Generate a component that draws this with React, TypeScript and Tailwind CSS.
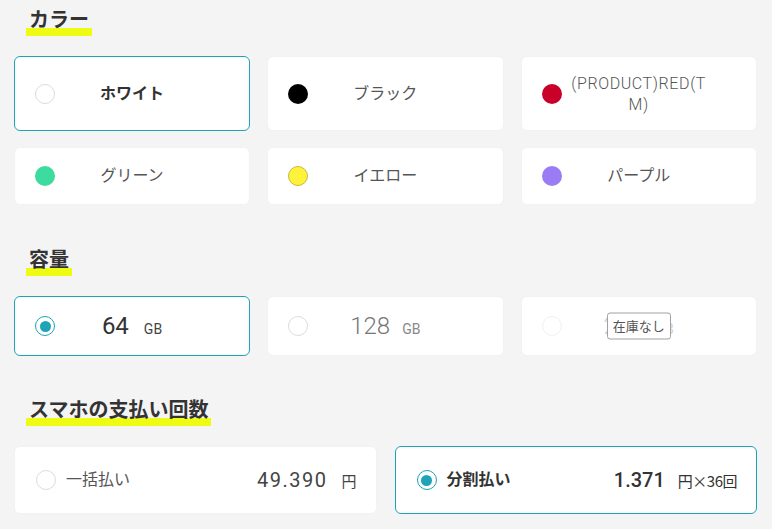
import React from "react";

function Radio({ state }: { state: "on" | "off" | "dim" }) {
  if (state === "on")
    return (
      <span className="flex h-[20px] w-[20px] shrink-0 items-center justify-center rounded-full border-[1.5px] border-[#1ea3b8] bg-white">
        <span className="h-[11px] w-[11px] rounded-full bg-[#1ea3b8]" />
      </span>
    );
  return (
    <span
      className={
        "h-[20px] w-[20px] shrink-0 rounded-full border bg-white " +
        (state === "dim" ? "border-[#f0f0f0]" : "border-[#dcdcdc]")
      }
    />
  );
}

function Heading({ children }: { children: React.ReactNode }) {
  return (
    <div className="ml-[12px]">
      <span className="inline-block h-[26px] bg-[linear-gradient(transparent_69%,#eefc14_69%)] px-[3px] text-[20px] font-bold leading-[20px] text-[#333]">
        {children}
      </span>
    </div>
  );
}

function Swatch({ color, border }: { color: string; border?: string }) {
  return (
    <span
      className="h-[20px] w-[20px] shrink-0 rounded-full"
      style={{ backgroundColor: color, border: border ? `1px solid ${border}` : undefined }}
    />
  );
}

function Card({
  selected,
  className,
  children,
}: {
  selected?: boolean;
  className: string;
  children: React.ReactNode;
}) {
  return (
    <div
      className={
        "relative flex items-center rounded-[6px] border bg-white " +
        (selected ? "border-[#1ea3b8]" : "border-[#f2f2f2]") +
        " " +
        className
      }
    >
      {children}
    </div>
  );
}

export default function App() {
  const colors = [
    { name: "グリーン", c: "#3ddba0" },
    { name: "イエロー", c: "#fff23a", b: "#c8b84a" },
    { name: "パープル", c: "#9a7cf5" },
  ];
  return (
    <div
      className="min-h-[529px] w-[772px] bg-[#f4f4f4] pl-[14px] pr-[15px] pt-[10px]"
      style={{ fontFamily: "Roboto, 'Noto Sans CJK JP', sans-serif" }}
    >
      <Heading>カラー</Heading>
      <div className="mt-[20px] grid grid-cols-3 gap-x-[17px] gap-y-[16px]">
        <Card selected className="h-[75px] pl-[20px]">
          <Radio state="off" />
          <span className="ml-[6px] w-[142px] text-center text-[16px] font-bold text-[#333]">ホワイト</span>
        </Card>
        <Card className="h-[75px] pl-[20px]">
          <Swatch color="#000" />
          <span className="ml-[6px] w-[142px] text-center text-[16px] text-[#555]">ブラック</span>
        </Card>
        <Card className="h-[75px] pl-[20px]">
          <Swatch color="#c8002a" />
          <span className="ml-[6px] w-[142px] text-center text-[16px] font-light leading-[21px] tracking-[0.6px] text-[#555]">
            (PRODUCT)RED(T
            <br />
            M)
          </span>
        </Card>
        {colors.map((x) => (
          <Card key={x.name} className="h-[58px] pl-[20px]">
            <Swatch color={x.c} border={x.b} />
            <span className="ml-[6px] w-[142px] text-center text-[16px] text-[#555]">{x.name}</span>
          </Card>
        ))}
      </div>

      <div className="mt-[45px]">
        <Heading>容量</Heading>
      </div>
      <div className="mt-[20px] grid grid-cols-3 gap-x-[17px]">
        <Card selected className="h-[60px] pl-[20px]">
          <Radio state="on" />
          <span className="ml-[6px] flex w-[142px] items-baseline justify-center">
            <span className="text-[24px] font-normal text-[#333]">64</span>
            <span className="ml-[15px] text-[14px] text-[#444]">GB</span>
          </span>
        </Card>
        <Card className="h-[60px] pl-[20px]">
          <Radio state="off" />
          <span className="ml-[6px] flex w-[142px] items-baseline justify-center">
            <span className="text-[24px] font-light text-[#777]">128</span>
            <span className="ml-[12px] text-[14px] text-[#888]">GB</span>
          </span>
        </Card>
        <Card className="h-[60px] pl-[20px]">
          <Radio state="dim" />
          <span className="ml-[6px] flex w-[142px] items-baseline justify-center">
            <span className="text-[24px] font-light text-[#cfcfcf]">256</span>
            <span className="ml-[12px] text-[14px] text-[#cfcfcf]">GB</span>
          </span>
          <span className="absolute left-1/2 top-1/2 -translate-x-1/2 -translate-y-1/2 whitespace-nowrap rounded-[3px] border border-[#a0a0a0] bg-white px-[5px] py-[3px] text-[13px] leading-[19px] text-[#555]">
            在庫なし
          </span>
        </Card>
      </div>

      <div className="mt-[44px]">
        <Heading>スマホの支払い回数</Heading>
      </div>
      <div className="mt-[20px] grid grid-cols-2 gap-x-[18px]">
        <Card className="h-[68px] pl-[21px] pr-[19px]">
          <Radio state="off" />
          <span className="ml-[10px] text-[16px] text-[#555]">一括払い</span>
          <span className="ml-auto flex items-baseline">
            <span className="text-[20px] tracking-[1.5px] text-[#444]">49.390</span>
            <span className="ml-[14px] text-[15px] text-[#444]">円</span>
          </span>
        </Card>
        <Card selected className="h-[68px] pl-[21px] pr-[19px]">
          <Radio state="on" />
          <span className="ml-[10px] text-[16px] font-bold text-[#333]">分割払い</span>
          <span className="ml-auto flex items-baseline">
            <span className="text-[20px] font-medium text-[#333]">1.371</span>
            <span
              className="ml-[13px] text-[15px] tracking-[-0.5px] text-[#333]"
              style={{ fontFamily: "'Noto Sans CJK JP', sans-serif" }}
            >
              円×36回
            </span>
          </span>
        </Card>
      </div>
    </div>
  );
}
